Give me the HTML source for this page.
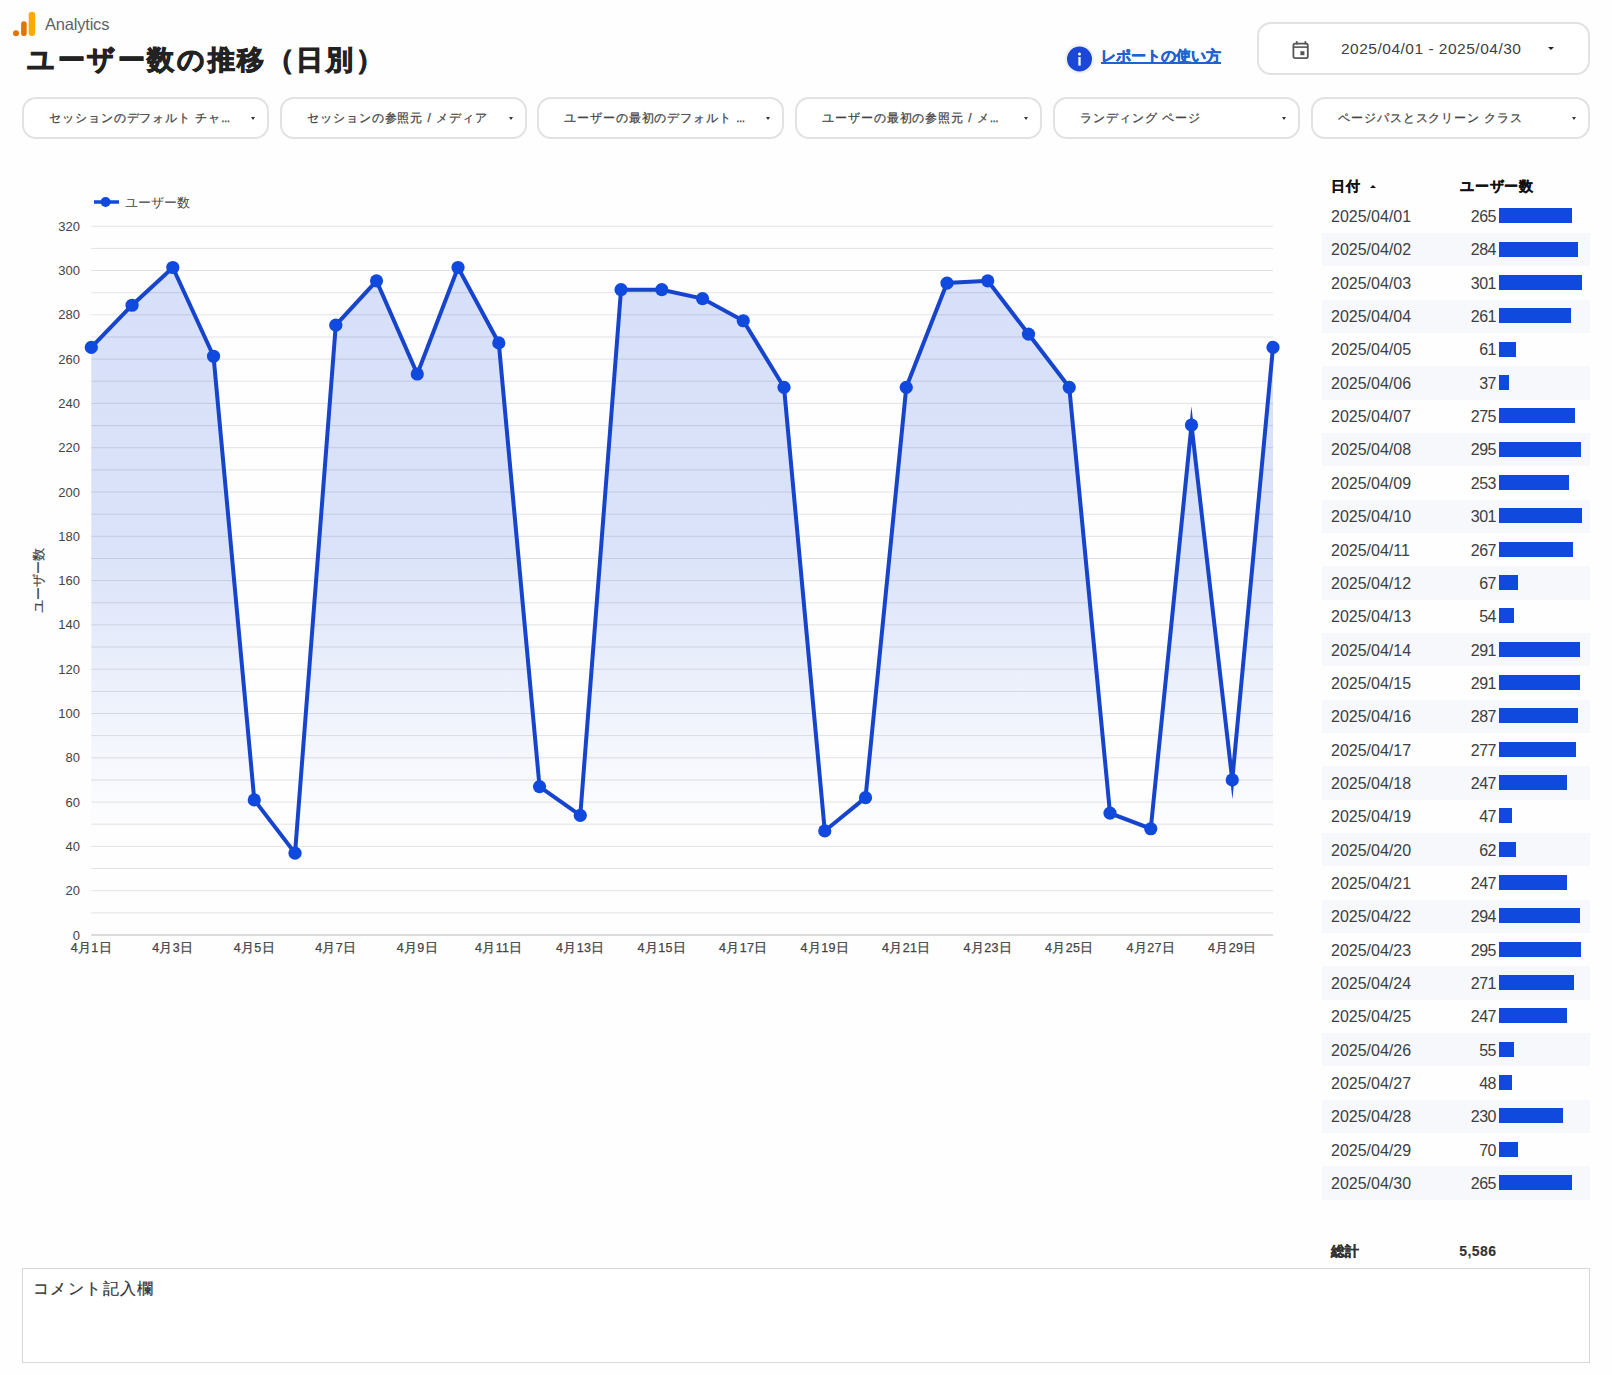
<!DOCTYPE html>
<html><head><meta charset="utf-8">
<style>
*{margin:0;padding:0;box-sizing:border-box}
html,body{width:1612px;height:1375px;overflow:hidden;background:#fefefe}
body{position:relative;font-family:"Liberation Sans",sans-serif;color:#333}
.abs{position:absolute}
.chart{position:absolute;left:0;top:0}
.logo{position:absolute;left:12px;top:11px;width:24px;height:26px}
.brand{position:absolute;left:45px;top:15px;font-size:16.5px;color:#5f6368;letter-spacing:-0.2px}
.title{position:absolute;left:27px;top:42px;font-size:27px;font-weight:bold;color:#222;white-space:nowrap;letter-spacing:2.6px;-webkit-text-stroke:1px #222}
.info{position:absolute;left:1066px;top:45px;width:27px;height:27px;border-radius:50%;background:#1a47d6;box-shadow:0 0 0 2px #eef0f6}
.info:after{content:"i";position:absolute;left:0;right:0;top:4px;text-align:center;color:#fff;font-weight:bold;font-size:17px}
.link{position:absolute;left:1101px;top:47px;font-size:15px;font-weight:bold;color:#1f62d2;text-decoration:underline;text-decoration-thickness:1.5px;text-underline-offset:1px;white-space:nowrap;-webkit-text-stroke:0.4px #1f62d2}
.date{position:absolute;left:1257px;top:21.5px;width:333px;height:53.5px;border:2px solid #e2e2e2;border-radius:14px;background:#fff}
.date .t{position:absolute;left:82px;top:16.5px;font-size:15.5px;color:#3c4043;white-space:nowrap;letter-spacing:0.5px}
.chip{position:absolute;top:96.5px;height:42.5px;border:2px solid #e2e2e2;border-radius:14px;background:#fff}
.chip .ct{position:absolute;left:25px;top:11.5px;font-size:12px;color:#444;white-space:nowrap;letter-spacing:0.92px;-webkit-text-stroke:0.25px #444}
.el{letter-spacing:-0.6px}
.arr{position:absolute;right:12.5px;top:18.5px;width:0;height:0;border-left:2.5px solid transparent;border-right:2.5px solid transparent;border-top:3px solid #333}
.date .arr{right:34.5px;top:23px;border-left-width:3.5px;border-right-width:3.5px;border-top-width:3.5px;border-top-color:#222}
.th{position:absolute;top:178px;font-size:14px;font-weight:bold;color:#111;white-space:nowrap;letter-spacing:0.8px;-webkit-text-stroke:0.3px #111}
.row{position:absolute;left:1322px;width:268px;height:33.34px}
.row .d{position:absolute;left:9px;top:8.5px;font-size:16px;color:#3c4043;letter-spacing:0px}
.row .n{position:absolute;right:94px;top:8.5px;font-size:16px;color:#3c4043;text-align:right;letter-spacing:-0.5px}
.row .bar{position:absolute;left:177px;top:8.6px;height:15px;background:#1049dd}
.tot{position:absolute;top:1243px;font-size:14px;font-weight:bold;color:#333;-webkit-text-stroke:0.3px #333}
.comment{position:absolute;left:22px;top:1268px;width:1568px;height:95px;border:1.5px solid #d8d8d8;background:#fff}
.comment span{position:absolute;left:10px;top:9.5px;font-size:16px;color:#333;letter-spacing:1.4px;-webkit-text-stroke:0.2px #333}
</style></head><body>
<svg class="chart" width="1612" height="1375" viewBox="0 0 1612 1375">
<defs><linearGradient id="g" gradientUnits="userSpaceOnUse" x1="0" y1="268" x2="0" y2="835">
<stop offset="0" stop-color="#1049dd" stop-opacity="0.165"/>
<stop offset="0.5" stop-color="#1049dd" stop-opacity="0.15"/>
<stop offset="0.75" stop-color="#1049dd" stop-opacity="0.07"/>
<stop offset="1" stop-color="#1049dd" stop-opacity="0"/>
</linearGradient></defs>
<path d="M91.30,935.00 L91.30,347.38 132.05,305.23 172.80,267.52 213.54,356.25 254.29,799.89 295.04,853.13 335.79,325.20 376.54,280.83 417.29,374.00 458.03,267.52 498.78,342.94 539.53,786.58 580.28,815.42 621.03,289.70 661.78,289.70 702.52,298.58 743.27,320.76 784.02,387.30 824.77,830.94 865.52,797.67 906.27,387.30 947.01,283.05 987.76,280.83 1028.51,334.07 1069.26,387.30 1110.01,813.20 1150.76,828.73 1191.50,425.01 1232.25,779.93 1273.00,347.38 L1273.00,935.00 Z" fill="url(#g)"/>
<line x1="91.3" y1="935.0" x2="1273.0" y2="935.0" stroke="#cfcfcf" stroke-width="1.5"/><line x1="91.3" y1="912.9" x2="1273.0" y2="912.9" stroke="rgba(0,0,0,0.11)" stroke-width="1"/><line x1="91.3" y1="890.7" x2="1273.0" y2="890.7" stroke="rgba(0,0,0,0.11)" stroke-width="1"/><line x1="91.3" y1="868.5" x2="1273.0" y2="868.5" stroke="rgba(0,0,0,0.11)" stroke-width="1"/><line x1="91.3" y1="846.4" x2="1273.0" y2="846.4" stroke="rgba(0,0,0,0.11)" stroke-width="1"/><line x1="91.3" y1="824.2" x2="1273.0" y2="824.2" stroke="rgba(0,0,0,0.11)" stroke-width="1"/><line x1="91.3" y1="802.1" x2="1273.0" y2="802.1" stroke="rgba(0,0,0,0.11)" stroke-width="1"/><line x1="91.3" y1="780.0" x2="1273.0" y2="780.0" stroke="rgba(0,0,0,0.11)" stroke-width="1"/><line x1="91.3" y1="757.8" x2="1273.0" y2="757.8" stroke="rgba(0,0,0,0.11)" stroke-width="1"/><line x1="91.3" y1="735.6" x2="1273.0" y2="735.6" stroke="rgba(0,0,0,0.11)" stroke-width="1"/><line x1="91.3" y1="713.5" x2="1273.0" y2="713.5" stroke="rgba(0,0,0,0.11)" stroke-width="1"/><line x1="91.3" y1="691.4" x2="1273.0" y2="691.4" stroke="rgba(0,0,0,0.11)" stroke-width="1"/><line x1="91.3" y1="669.2" x2="1273.0" y2="669.2" stroke="rgba(0,0,0,0.11)" stroke-width="1"/><line x1="91.3" y1="647.0" x2="1273.0" y2="647.0" stroke="rgba(0,0,0,0.11)" stroke-width="1"/><line x1="91.3" y1="624.9" x2="1273.0" y2="624.9" stroke="rgba(0,0,0,0.11)" stroke-width="1"/><line x1="91.3" y1="602.8" x2="1273.0" y2="602.8" stroke="rgba(0,0,0,0.11)" stroke-width="1"/><line x1="91.3" y1="580.6" x2="1273.0" y2="580.6" stroke="rgba(0,0,0,0.11)" stroke-width="1"/><line x1="91.3" y1="558.5" x2="1273.0" y2="558.5" stroke="rgba(0,0,0,0.11)" stroke-width="1"/><line x1="91.3" y1="536.3" x2="1273.0" y2="536.3" stroke="rgba(0,0,0,0.11)" stroke-width="1"/><line x1="91.3" y1="514.2" x2="1273.0" y2="514.2" stroke="rgba(0,0,0,0.11)" stroke-width="1"/><line x1="91.3" y1="492.0" x2="1273.0" y2="492.0" stroke="rgba(0,0,0,0.11)" stroke-width="1"/><line x1="91.3" y1="469.9" x2="1273.0" y2="469.9" stroke="rgba(0,0,0,0.11)" stroke-width="1"/><line x1="91.3" y1="447.7" x2="1273.0" y2="447.7" stroke="rgba(0,0,0,0.11)" stroke-width="1"/><line x1="91.3" y1="425.6" x2="1273.0" y2="425.6" stroke="rgba(0,0,0,0.11)" stroke-width="1"/><line x1="91.3" y1="403.4" x2="1273.0" y2="403.4" stroke="rgba(0,0,0,0.11)" stroke-width="1"/><line x1="91.3" y1="381.2" x2="1273.0" y2="381.2" stroke="rgba(0,0,0,0.11)" stroke-width="1"/><line x1="91.3" y1="359.1" x2="1273.0" y2="359.1" stroke="rgba(0,0,0,0.11)" stroke-width="1"/><line x1="91.3" y1="337.0" x2="1273.0" y2="337.0" stroke="rgba(0,0,0,0.11)" stroke-width="1"/><line x1="91.3" y1="314.8" x2="1273.0" y2="314.8" stroke="rgba(0,0,0,0.11)" stroke-width="1"/><line x1="91.3" y1="292.7" x2="1273.0" y2="292.7" stroke="rgba(0,0,0,0.11)" stroke-width="1"/><line x1="91.3" y1="270.5" x2="1273.0" y2="270.5" stroke="rgba(0,0,0,0.11)" stroke-width="1"/><line x1="91.3" y1="248.4" x2="1273.0" y2="248.4" stroke="rgba(0,0,0,0.11)" stroke-width="1"/><line x1="91.3" y1="226.2" x2="1273.0" y2="226.2" stroke="rgba(0,0,0,0.11)" stroke-width="1"/>
<polyline points="91.30,347.38 132.05,305.23 172.80,267.52 213.54,356.25 254.29,799.89 295.04,853.13 335.79,325.20 376.54,280.83 417.29,374.00 458.03,267.52 498.78,342.94 539.53,786.58 580.28,815.42 621.03,289.70 661.78,289.70 702.52,298.58 743.27,320.76 784.02,387.30 824.77,830.94 865.52,797.67 906.27,387.30 947.01,283.05 987.76,280.83 1028.51,334.07 1069.26,387.30 1110.01,813.20 1150.76,828.73 1191.50,425.01 1232.25,779.93 1273.00,347.38" fill="none" stroke="#1644cc" stroke-width="4" stroke-linejoin="miter" stroke-miterlimit="10"/>
<circle cx="91.30" cy="347.38" r="6.6" fill="#1049dd"/><circle cx="132.05" cy="305.23" r="6.6" fill="#1049dd"/><circle cx="172.80" cy="267.52" r="6.6" fill="#1049dd"/><circle cx="213.54" cy="356.25" r="6.6" fill="#1049dd"/><circle cx="254.29" cy="799.89" r="6.6" fill="#1049dd"/><circle cx="295.04" cy="853.13" r="6.6" fill="#1049dd"/><circle cx="335.79" cy="325.20" r="6.6" fill="#1049dd"/><circle cx="376.54" cy="280.83" r="6.6" fill="#1049dd"/><circle cx="417.29" cy="374.00" r="6.6" fill="#1049dd"/><circle cx="458.03" cy="267.52" r="6.6" fill="#1049dd"/><circle cx="498.78" cy="342.94" r="6.6" fill="#1049dd"/><circle cx="539.53" cy="786.58" r="6.6" fill="#1049dd"/><circle cx="580.28" cy="815.42" r="6.6" fill="#1049dd"/><circle cx="621.03" cy="289.70" r="6.6" fill="#1049dd"/><circle cx="661.78" cy="289.70" r="6.6" fill="#1049dd"/><circle cx="702.52" cy="298.58" r="6.6" fill="#1049dd"/><circle cx="743.27" cy="320.76" r="6.6" fill="#1049dd"/><circle cx="784.02" cy="387.30" r="6.6" fill="#1049dd"/><circle cx="824.77" cy="830.94" r="6.6" fill="#1049dd"/><circle cx="865.52" cy="797.67" r="6.6" fill="#1049dd"/><circle cx="906.27" cy="387.30" r="6.6" fill="#1049dd"/><circle cx="947.01" cy="283.05" r="6.6" fill="#1049dd"/><circle cx="987.76" cy="280.83" r="6.6" fill="#1049dd"/><circle cx="1028.51" cy="334.07" r="6.6" fill="#1049dd"/><circle cx="1069.26" cy="387.30" r="6.6" fill="#1049dd"/><circle cx="1110.01" cy="813.20" r="6.6" fill="#1049dd"/><circle cx="1150.76" cy="828.73" r="6.6" fill="#1049dd"/><circle cx="1191.50" cy="425.01" r="6.6" fill="#1049dd"/><circle cx="1232.25" cy="779.93" r="6.6" fill="#1049dd"/><circle cx="1273.00" cy="347.38" r="6.6" fill="#1049dd"/>
<g font-family="Liberation Sans, sans-serif" font-size="13" fill="#444"><text x="80" y="939.5" text-anchor="end">0</text><text x="80" y="895.2" text-anchor="end">20</text><text x="80" y="850.9" text-anchor="end">40</text><text x="80" y="806.6" text-anchor="end">60</text><text x="80" y="762.3" text-anchor="end">80</text><text x="80" y="718.0" text-anchor="end">100</text><text x="80" y="673.7" text-anchor="end">120</text><text x="80" y="629.4" text-anchor="end">140</text><text x="80" y="585.1" text-anchor="end">160</text><text x="80" y="540.8" text-anchor="end">180</text><text x="80" y="496.5" text-anchor="end">200</text><text x="80" y="452.2" text-anchor="end">220</text><text x="80" y="407.9" text-anchor="end">240</text><text x="80" y="363.6" text-anchor="end">260</text><text x="80" y="319.3" text-anchor="end">280</text><text x="80" y="275.0" text-anchor="end">300</text><text x="80" y="230.7" text-anchor="end">320</text></g>
<g font-family="Liberation Sans, sans-serif" font-size="12.5" fill="#444" stroke="#444" stroke-width="0.25" letter-spacing="0.3"><text x="91.3" y="952" text-anchor="middle">4月1日</text><text x="172.8" y="952" text-anchor="middle">4月3日</text><text x="254.3" y="952" text-anchor="middle">4月5日</text><text x="335.8" y="952" text-anchor="middle">4月7日</text><text x="417.3" y="952" text-anchor="middle">4月9日</text><text x="498.8" y="952" text-anchor="middle">4月11日</text><text x="580.3" y="952" text-anchor="middle">4月13日</text><text x="661.8" y="952" text-anchor="middle">4月15日</text><text x="743.3" y="952" text-anchor="middle">4月17日</text><text x="824.8" y="952" text-anchor="middle">4月19日</text><text x="906.3" y="952" text-anchor="middle">4月21日</text><text x="987.8" y="952" text-anchor="middle">4月23日</text><text x="1069.3" y="952" text-anchor="middle">4月25日</text><text x="1150.8" y="952" text-anchor="middle">4月27日</text><text x="1232.3" y="952" text-anchor="middle">4月29日</text></g>
<line x1="94" y1="202" x2="119" y2="202" stroke="#1049dd" stroke-width="3.5"/>
<circle cx="105.6" cy="202" r="5" fill="#1049dd"/>
<text x="125" y="206.5" font-family="Liberation Sans, sans-serif" font-size="12.5" fill="#444">ユーザー数</text>
<text transform="translate(43,580.5) rotate(-90)" text-anchor="middle" font-family="Liberation Sans, sans-serif" font-size="12.5" fill="#444" stroke="#444" stroke-width="0.2">ユーザー数</text>
</svg>
<svg class="logo" viewBox="0 0 24 26">
<rect x="16.7" y="0.7" width="6.5" height="24.4" rx="3.25" fill="#f9ab00"/>
<rect x="9.1" y="10.3" width="5.6" height="14.8" rx="2.8" fill="#e37400"/>
<circle cx="4" cy="22.3" r="3" fill="#e37400"/>
</svg>
<div class="brand">Analytics</div>
<div class="title">ユーザー数の推移（日別）</div>
<svg class="abs" style="left:1063px;top:42px" width="34" height="34" viewBox="0 0 34 34"><circle cx="16.5" cy="17" r="13.6" fill="#1a47d6" stroke="#f0f1f5" stroke-width="2.2"/><circle cx="16.5" cy="12" r="1.5" fill="#fff"/><rect x="15.35" y="15" width="2.3" height="8.6" fill="#fff"/></svg>
<div class="link">レポートの使い方</div>
<div class="date">
<svg class="abs" style="left:32.5px;top:16px" width="18" height="20" viewBox="0 0 18 20"><rect x="1.4" y="3.6" width="14.4" height="14.6" rx="1.6" fill="none" stroke="#555" stroke-width="1.8"/><rect x="1.4" y="6.3" width="14.4" height="1.6" fill="#555"/><rect x="3.9" y="1.2" width="1.8" height="3.2" fill="#555"/><rect x="12.5" y="1.2" width="1.8" height="3.2" fill="#555"/><rect x="8.4" y="11.2" width="4" height="4" fill="#555"/></svg>
<span class="t">2025/04/01 - 2025/04/30</span><span class="arr"></span></div>
<div class="chip" style="left:22px;width:247px"><span class="ct">セッションのデフォルト チャ<span class=el>...</span></span><span class="arr"></span></div><div class="chip" style="left:280px;width:247px"><span class="ct">セッションの参照元 / メディア</span><span class="arr"></span></div><div class="chip" style="left:537px;width:247px"><span class="ct">ユーザーの最初のデフォルト <span class=el>...</span></span><span class="arr"></span></div><div class="chip" style="left:795px;width:247px"><span class="ct">ユーザーの最初の参照元 / メ<span class=el>...</span></span><span class="arr"></span></div><div class="chip" style="left:1053px;width:247px"><span class="ct">ランディング ページ</span><span class="arr"></span></div><div class="chip" style="left:1311px;width:279px"><span class="ct">ページパスとスクリーン クラス</span><span class="arr"></span></div>
<div class="th" style="left:1331px">日付</div><div class="abs" style="left:1369.5px;top:184.5px;width:0;height:0;border-left:3px solid transparent;border-right:3px solid transparent;border-bottom:3.5px solid #111"></div>
<div class="th" style="left:1460px">ユーザー数</div>
<div class="row" style="top:199.60px;"><span class="d">2025/04/01</span><span class="n">265</span><span class="bar" style="width:73.3px"></span></div><div class="row" style="top:232.94px;background:#f6f8fb;"><span class="d">2025/04/02</span><span class="n">284</span><span class="bar" style="width:78.5px"></span></div><div class="row" style="top:266.28px;"><span class="d">2025/04/03</span><span class="n">301</span><span class="bar" style="width:83.2px"></span></div><div class="row" style="top:299.62px;background:#f6f8fb;"><span class="d">2025/04/04</span><span class="n">261</span><span class="bar" style="width:72.2px"></span></div><div class="row" style="top:332.96px;"><span class="d">2025/04/05</span><span class="n">61</span><span class="bar" style="width:16.9px"></span></div><div class="row" style="top:366.30px;background:#f6f8fb;"><span class="d">2025/04/06</span><span class="n">37</span><span class="bar" style="width:10.2px"></span></div><div class="row" style="top:399.64px;"><span class="d">2025/04/07</span><span class="n">275</span><span class="bar" style="width:76.0px"></span></div><div class="row" style="top:432.98px;background:#f6f8fb;"><span class="d">2025/04/08</span><span class="n">295</span><span class="bar" style="width:81.6px"></span></div><div class="row" style="top:466.32px;"><span class="d">2025/04/09</span><span class="n">253</span><span class="bar" style="width:70.0px"></span></div><div class="row" style="top:499.66px;background:#f6f8fb;"><span class="d">2025/04/10</span><span class="n">301</span><span class="bar" style="width:83.2px"></span></div><div class="row" style="top:533.00px;"><span class="d">2025/04/11</span><span class="n">267</span><span class="bar" style="width:73.8px"></span></div><div class="row" style="top:566.34px;background:#f6f8fb;"><span class="d">2025/04/12</span><span class="n">67</span><span class="bar" style="width:18.5px"></span></div><div class="row" style="top:599.68px;"><span class="d">2025/04/13</span><span class="n">54</span><span class="bar" style="width:14.9px"></span></div><div class="row" style="top:633.02px;background:#f6f8fb;"><span class="d">2025/04/14</span><span class="n">291</span><span class="bar" style="width:80.5px"></span></div><div class="row" style="top:666.36px;"><span class="d">2025/04/15</span><span class="n">291</span><span class="bar" style="width:80.5px"></span></div><div class="row" style="top:699.70px;background:#f6f8fb;"><span class="d">2025/04/16</span><span class="n">287</span><span class="bar" style="width:79.4px"></span></div><div class="row" style="top:733.04px;"><span class="d">2025/04/17</span><span class="n">277</span><span class="bar" style="width:76.6px"></span></div><div class="row" style="top:766.38px;background:#f6f8fb;"><span class="d">2025/04/18</span><span class="n">247</span><span class="bar" style="width:68.3px"></span></div><div class="row" style="top:799.72px;"><span class="d">2025/04/19</span><span class="n">47</span><span class="bar" style="width:13.0px"></span></div><div class="row" style="top:833.06px;background:#f6f8fb;"><span class="d">2025/04/20</span><span class="n">62</span><span class="bar" style="width:17.1px"></span></div><div class="row" style="top:866.40px;"><span class="d">2025/04/21</span><span class="n">247</span><span class="bar" style="width:68.3px"></span></div><div class="row" style="top:899.74px;background:#f6f8fb;"><span class="d">2025/04/22</span><span class="n">294</span><span class="bar" style="width:81.3px"></span></div><div class="row" style="top:933.08px;"><span class="d">2025/04/23</span><span class="n">295</span><span class="bar" style="width:81.6px"></span></div><div class="row" style="top:966.42px;background:#f6f8fb;"><span class="d">2025/04/24</span><span class="n">271</span><span class="bar" style="width:74.9px"></span></div><div class="row" style="top:999.76px;"><span class="d">2025/04/25</span><span class="n">247</span><span class="bar" style="width:68.3px"></span></div><div class="row" style="top:1033.10px;background:#f6f8fb;"><span class="d">2025/04/26</span><span class="n">55</span><span class="bar" style="width:15.2px"></span></div><div class="row" style="top:1066.44px;"><span class="d">2025/04/27</span><span class="n">48</span><span class="bar" style="width:13.3px"></span></div><div class="row" style="top:1099.78px;background:#f6f8fb;"><span class="d">2025/04/28</span><span class="n">230</span><span class="bar" style="width:63.6px"></span></div><div class="row" style="top:1133.12px;"><span class="d">2025/04/29</span><span class="n">70</span><span class="bar" style="width:19.4px"></span></div><div class="row" style="top:1166.46px;background:#f6f8fb;"><span class="d">2025/04/30</span><span class="n">265</span><span class="bar" style="width:73.3px"></span></div>
<div class="tot" style="left:1331px">総計</div>
<div class="tot" style="left:1396px;width:100.4px;text-align:right;letter-spacing:0.4px;-webkit-text-stroke:0.1px #333">5,586</div>
<div class="comment"><span>コメント記入欄</span></div>
</body></html>
